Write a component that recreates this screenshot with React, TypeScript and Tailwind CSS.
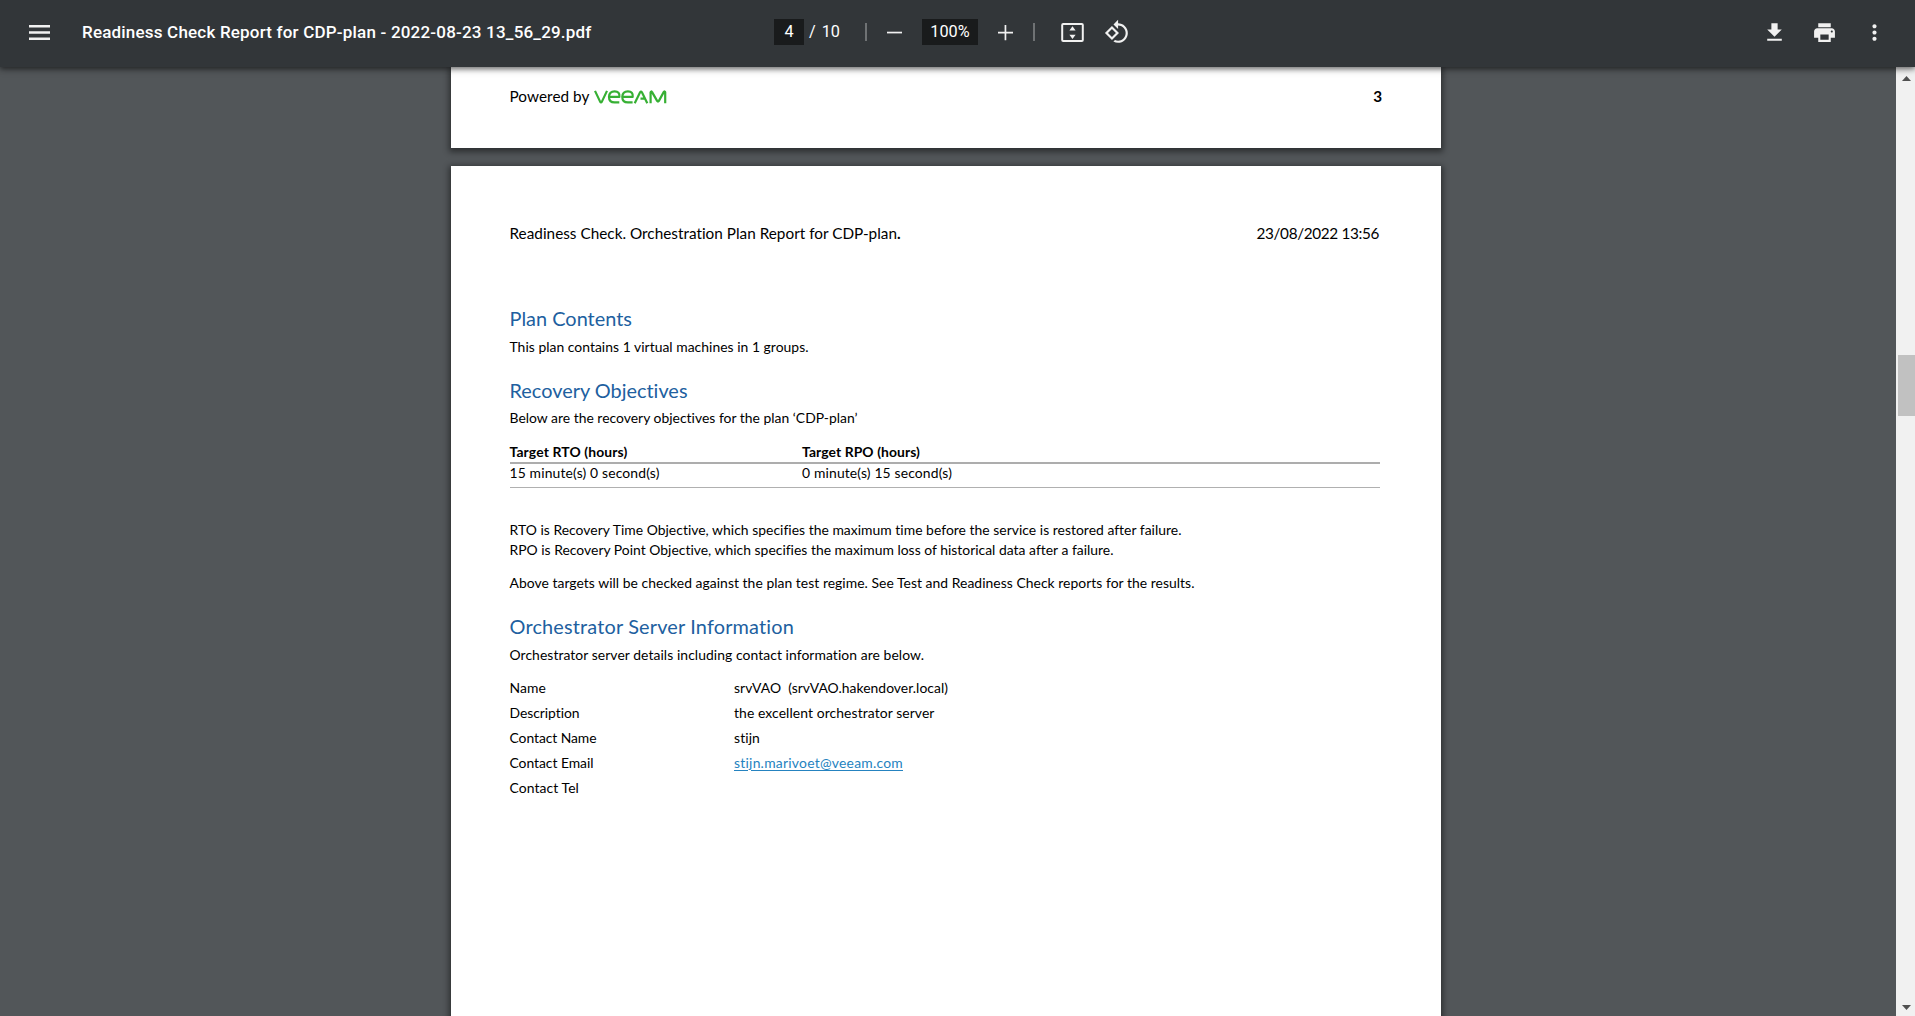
import { useLayoutEffect, useRef, useState } from "react";

type FitProps = { children: string; width: number; className?: string };

/* A run of document text whose tracking is adjusted to fill the given width. */
function Run({ children, width, className = "" }: FitProps) {
  const ref = useRef<HTMLSpanElement>(null);
  const [tracking, setTracking] = useState(0);
  useLayoutEffect(() => {
    if (ref.current) {
      const natural = ref.current.getBoundingClientRect().width;
      setTracking((width - natural) / children.length);
    }
  }, [children, width]);
  return (
    <span
      ref={ref}
      className={`inline-block whitespace-pre ${className}`}
      style={{ letterSpacing: tracking ? `${tracking}px` : undefined }}
    >
      {children}
    </span>
  );
}

function Heading({ children, width, className = "" }: FitProps) {
  return (
    <h2 className={`h-[26px] text-[19.9px] leading-[26px] text-[#215f9f] ${className}`}>
      <Run width={width}>{children}</Run>
    </h2>
  );
}

function Body({ children, width, className = "" }: FitProps) {
  return (
    <p className={`h-5 ${className}`}>
      <Run width={width}>{children}</Run>
    </p>
  );
}

function VeeamLogo() {
  return (
    <svg width="73" height="14" viewBox="0 0 73 14" fill="none" stroke="#37b034" strokeWidth="2.2" strokeLinejoin="round">
      <path d="M1 .9 6.1 11.6Q7 13 7.9 11.6L13 .9" />
      <path d="M15.6 6.9H25.4Q26 1.4 20.6 1.4T15 6.9Q15 12.4 20.6 12.4H25.3" />
      <path d="M28.9 6.9H38.7Q39.3 1.4 33.9 1.4T28.3 6.9Q28.3 12.4 33.9 12.4H38.6" />
      <path d="M40.7 13.2 46.1 2.3Q47 .9 47.9 2.3L53.3 13.2M46.5 8.7H50.6" />
      <path d="M56.6 13.2V2.2Q57 .8 58.1 2.1L63.1 10.9Q64 12.2 64.9 10.9L69.7 2.1Q71 .8 71.2 2.2V13.2" />
    </svg>
  );
}

function Toolbar() {
  return (
    <header className="relative z-10 flex h-[67px] shrink-0 items-start bg-[#323639] font-['Roboto',sans-serif] text-[#fff] shadow-[0_2px_5px_rgba(0,0,0,0.45),0_1px_9px_rgba(0,0,0,0.25)]">
      <div className="flex w-[774px] items-center pt-[19px] pl-[27px]">
        <svg width="25" height="26" viewBox="0 0 25 26" fill="#f1f1f1">
          <path d="M2 6h21v2.5H2zM2 12.2h21v2.5H2zM2 18.4h21v2.5H2z" />
        </svg>
        <h1 className="ml-[30px] h-[26px] text-[17px] leading-[26px] font-medium">
          <Run width={509.5}>Readiness Check Report for CDP-plan - 2022-08-23 13_56_29.pdf</Run>
        </h1>
      </div>
      <div className="flex items-center pt-[19px] text-[16.25px] leading-[26px]">
        <span className="h-[26px] w-[30px] bg-[#191b1c] text-center leading-[25px]">4</span>
        <span className="ml-[5px]">/</span>
        <span className="ml-[6px]">10</span>
        <span className="ml-[25px] h-[18px] w-0.5 bg-[#6f7274]" />
        <svg className="ml-[15px]" width="25" height="26" viewBox="0 0 25 26" fill="#f1f1f1">
          <path d="M5 12.7h15v1.7H5z" />
        </svg>
        <span className="ml-[15px] h-[26px] w-14 bg-[#191b1c] text-center leading-[25px]">100%</span>
        <svg className="ml-[15px]" width="25" height="26" viewBox="0 0 25 26" fill="#f1f1f1">
          <path d="M5 12.7h6.6V6h1.7v6.7H20v1.7h-6.7v6.8h-1.7v-6.8H5z" />
        </svg>
        <span className="ml-[15px] h-[18px] w-0.5 bg-[#6f7274]" />
        <svg className="ml-[25px]" width="25" height="26" viewBox="0 0 25 26" fill="#f1f1f1">
          <path
            fillRule="evenodd"
            d="M3.2 4h18.6a2 2 0 0 1 2 2v15a2 2 0 0 1-2 2H3.2a2 2 0 0 1-2-2V6a2 2 0 0 1 2-2zm0 2v15h18.6V6zM12.5 7.200l3.1 4.2H9.4zM12.5 20l3.1-4.2H9.4z"
          />
        </svg>
        <svg className="ml-[19.5px]" width="26" height="26" viewBox="0 0 24 24" fill="#f1f1f1">
          <path d="M7.34 6.41.86 12.9l6.49 6.48 6.49-6.48-6.5-6.49zM3.69 12.9l3.66-3.66L11 12.9l-3.66 3.66-3.65-3.66zm15.67-6.26C17.61 4.88 15.3 4 13 4V.76L8.76 5 13 9.24V6c1.79 0 3.58.68 4.95 2.05 2.73 2.73 2.73 7.17 0 9.9C16.58 19.32 14.79 20 13 20c-.97 0-1.94-.21-2.84-.61l-1.49 1.49C10.02 21.62 11.51 22 13 22c2.3 0 4.61-.88 6.36-2.64 3.52-3.51 3.52-9.21 0-12.72z" />
        </svg>
      </div>
      <div className="ml-auto flex items-center gap-[25px] pt-5 pr-[28px]">
        <svg width="25" height="25" viewBox="0 0 24 24" fill="#f1f1f1">
          <path d="M19 9h-4V3H9v6H5l7 7 7-7zM5 18v2h14v-2H5z" />
        </svg>
        <svg width="25" height="25" viewBox="0 0 24 24" fill="#f1f1f1">
          <path d="M19 8H5c-1.66 0-3 1.34-3 3v6h4v4h12v-4h4v-6c0-1.66-1.34-3-3-3zm-3 11H8v-5h8v5zm3-7c-.55 0-1-.45-1-1s.45-1 1-1 1 .45 1 1-.45 1-1 1zm-1-9H6v4h12V3z" />
        </svg>
        <svg width="25" height="25" viewBox="0 0 24 24" fill="#f1f1f1">
          <path d="M12 8c1.1 0 2-.9 2-2s-.9-2-2-2-2 .9-2 2 .9 2 2 2zm0 2c-1.1 0-2 .9-2 2s.9 2 2 2 2-.9 2-2-.9-2-2-2zm0 6c-1.1 0-2 .9-2 2s.9 2 2 2 2-.9 2-2-.9-2-2-2z" />
        </svg>
      </div>
    </header>
  );
}

function PreviousPage() {
  return (
    <section className="flex h-[81px] w-[990px] shrink-0 justify-between bg-white pt-[19px] pr-[59px] pl-[58.5px] text-[15.3px] leading-5 shadow-[0_2px_6px_2px_rgba(0,0,0,0.45)]">
      <div className="flex items-start">
        <Run width={80}>Powered by</Run>
        <div className="mt-[4px] ml-[4.5px]">
          <VeeamLogo />
        </div>
      </div>
      <span className="font-bold">3</span>
    </section>
  );
}

const serverDetails: { label: string; labelWidth: number; value: string; width: number; link?: boolean }[] = [
  { label: "Name", labelWidth: 36.5, value: "srvVAO  (srvVAO.hakendover.local)", width: 214 },
  { label: "Description", labelWidth: 70, value: "the excellent orchestrator server", width: 200.5 },
  { label: "Contact Name", labelWidth: 87, value: "stijn", width: 26 },
  { label: "Contact Email", labelWidth: 84, value: "stijn.marivoet@veeam.com", width: 169, link: true },
  { label: "Contact Tel", labelWidth: 69.5, value: "", width: 0 },
];

function CurrentPage() {
  return (
    <section className="mt-[18px] h-[1281px] w-[990px] shrink-0 bg-white pt-[57px] pr-[61px] pl-[58.5px] text-[13.9px] leading-5 shadow-[0_2px_6px_2px_rgba(0,0,0,0.45)]">
      <div className="flex h-5 justify-between pr-px text-[15.3px]">
        <div>
          <Run width={387.5}>Readiness Check. Orchestration Plan Report for CDP-plan</Run>
          <b>.</b>
        </div>
        <Run width={122.5}>23/08/2022 13:56</Run>
      </div>

      <Heading width={122.5} className="mt-[62px]">Plan Contents</Heading>
      <Body width={299} className="mt-[6px]">This plan contains 1 virtual machines in 1 groups.</Body>

      <Heading width={178} className="mt-5">Recovery Objectives</Heading>
      <Body width={348} className="mt-[5px]">Below are the recovery objectives for the plan ‘CDP-plan’</Body>

      <div className="mt-[14px] flex h-[22px] border-b-2 border-[#adadad] font-bold">
        <div className="w-[292.5px]">
          <Run width={118}>Target RTO (hours)</Run>
        </div>
        <Run width={118}>Target RPO (hours)</Run>
      </div>
      <div className="flex h-6 border-b border-[#b0b0b0]">
        <div className="-mt-px w-[292.5px]">
          <Run width={150}>15 minute(s) 0 second(s)</Run>
        </div>
        <div className="-mt-px">
          <Run width={150}>0 minute(s) 15 second(s)</Run>
        </div>
      </div>

      <Body width={672} className="mt-8">
        RTO is Recovery Time Objective, which specifies the maximum time before the service is restored after failure.
      </Body>
      <Body width={604}>
        RPO is Recovery Point Objective, which specifies the maximum loss of historical data after a failure.
      </Body>
      <Body width={685} className="mt-[13px]">
        Above targets will be checked against the plan test regime. See Test and Readiness Check reports for the results.
      </Body>

      <Heading width={284.5} className="mt-5">Orchestrator Server Information</Heading>
      <Body width={414.5} className="mt-[6px]">
        Orchestrator server details including contact information are below.
      </Body>

      <dl className="mt-[13px]">
        {serverDetails.map((row) => (
          <div key={row.label} className="flex h-[25px]">
            <dt className="w-[224.5px]">
              <Run width={row.labelWidth}>{row.label}</Run>
            </dt>
            <dd>
              {row.value && (
                <Run width={row.width} className={row.link ? "text-[#2583c0] underline underline-offset-2" : ""}>
                  {row.value}
                </Run>
              )}
            </dd>
          </div>
        ))}
      </dl>
    </section>
  );
}

function Scrollbar() {
  return (
    <div className="flex w-[19px] shrink-0 flex-col items-end bg-[#f1f1f1]">
      <svg width="17" height="17" viewBox="0 0 17 17" fill="#505050" className="mt-[2px]">
        <path d="M4 12h9L8.5 7z" />
      </svg>
      <div className="mt-[269px] h-[61px] w-[17px] bg-[#c1c1c1]" />
      <svg width="17" height="17" viewBox="0 0 17 17" fill="#505050" className="mt-auto">
        <path d="M4 6h9L8.5 11z" />
      </svg>
    </div>
  );
}

export default function App() {
  return (
    <div className="flex h-screen w-full flex-col overflow-hidden bg-[#525659]">
      <Toolbar />
      <div className="flex min-h-0 flex-1">
        <main className="flex flex-1 flex-col items-center overflow-hidden pr-[4px] font-['Lato',sans-serif] text-black [font-variant-ligatures:none]">
          <PreviousPage />
          <CurrentPage />
        </main>
        <Scrollbar />
      </div>
    </div>
  );
}
